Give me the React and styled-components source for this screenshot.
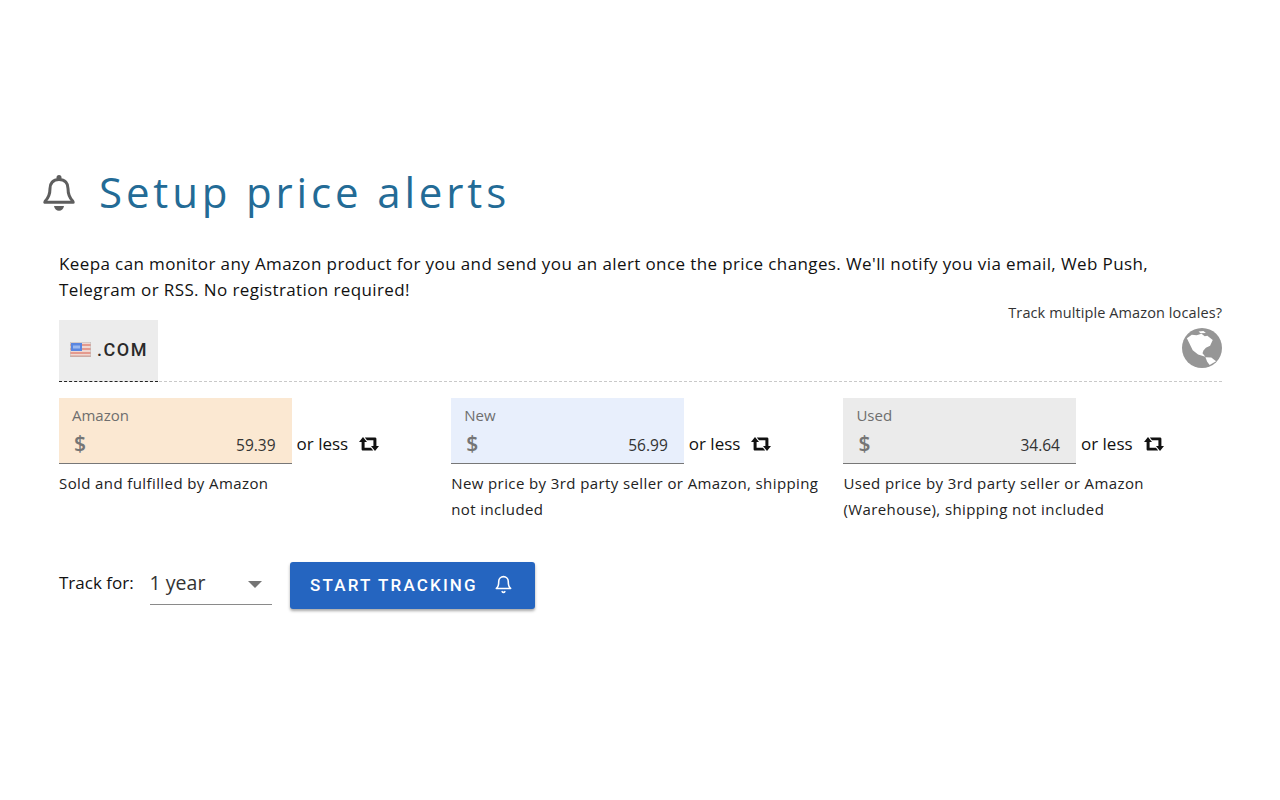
import React from "react";
import styled, { createGlobalStyle } from "styled-components";
import { FiBell } from "react-icons/fi";

const tiers = [
  { label: "Amazon", value: "59.39", tone: "#fbe8d2", text: "Sold and fulfilled by Amazon" },
  { label: "New", value: "56.99", tone: "#e8effc", text: "New price by 3rd party seller or Amazon, shipping not included" },
  { label: "Used", value: "34.64", tone: "#ebebeb", text: "Used price by 3rd party seller or Amazon (Warehouse), shipping not included" },
];

function BellIcon() {
  return (
    <svg width="34" height="38" viewBox="0 0 34 38" fill="none">
      <circle cx="17" cy="4.500" r="2.500" fill="#5e5e5e" />
      <path
        d="M17 6.500C10.800 6.500 8 10.500 8 15.500C8 21 6.300 25 3.300 28L2.800 29.300H31.200L30.700 28C27.700 25 26 21 26 15.500C26 10.500 23.200 6.500 17 6.500Z"
        stroke="#5e5e5e"
        strokeWidth="3"
        strokeLinejoin="round"
      />
      <path d="M12 33H22C21.500 36 19.500 37.800 17 37.800C14.500 37.800 12.500 36 12 33Z" fill="#5e5e5e" />
    </svg>
  );
}

function Flag() {
  return (
    <svg width="21" height="15" viewBox="0 0 21 15">
      <rect width="21" height="15" fill="#efd8d2" />
      <rect y="2" width="21" height="2" fill="#e59a8e" />
      <rect y="6" width="21" height="2" fill="#e59a8e" />
      <rect y="10" width="21" height="2" fill="#e59a8e" />
      <rect y="13.500" width="21" height="1.500" fill="#d99a8e" />
      <rect x="1" y="1" width="11" height="8" fill="#5a86e0" />
      <rect x="3" y="3.500" width="7" height="3" fill="#9db9ee" />
      <rect x="0.250" y="0.250" width="20.500" height="14.500" fill="none" stroke="#bdbdbd" strokeWidth="0.500" />
    </svg>
  );
}

function RepeatIcon() {
  return (
    <svg width="20" height="14" viewBox="0 0 20 14" fill="#111">
      <path d="M4 0L8 5H5.600V10.800H12L14.200 13.600H4C3.200 13.600 2.600 13 2.600 12.200V5H0Z" />
      <path d="M16 14L12 9H14.400V3.200H8L5.800 0.400H16C16.800 0.400 17.400 1 17.400 1.800V9H20Z" />
    </svg>
  );
}

function GlobeIcon() {
  return (
    <svg width="40" height="40" viewBox="0 0 41 41">
      <circle cx="20.500" cy="20.500" r="20.500" fill="#969696" />
      <path
        fill="#fff"
        d="M5 10.500L10 6.800L15 7.500L20 5.800L23.300 8.500L26 8L31.500 12.300L28.800 18.300L24.500 20.300L22 23L21 26L24 29.500L16.500 27.200L11 22.800L7.500 15.700Z"
      />
      <path fill="#fff" d="M24 30L30 30.300L35 34L28.300 38L25.800 34.700Z" />
      <path fill="#fff" d="M17 3.500L22 3L24.500 5L19 5.500Z" />
    </svg>
  );
}

export default function App() {
  return (
    <Page>
      <GlobalStyle />
      <Heading>
        <BellIcon />
        <Title>Setup price alerts</Title>
      </Heading>
      <Content>
        <Intro>
          Keepa can monitor any Amazon product for you and send you an alert once the price changes. We'll notify you
          via email, Web Push, Telegram or RSS. No registration required!
        </Intro>
        <TabBar>
          <Tab>
            <Flag />
            <TabLabel>.COM</TabLabel>
          </Tab>
          <Locales>
            <LocalesText>Track multiple Amazon locales?</LocalesText>
            <GlobeIcon />
          </Locales>
        </TabBar>
        <Columns>
          {tiers.map((t) => (
            <Column key={t.label}>
              <FieldRow>
                <Field $tone={t.tone}>
                  <FieldLabel>{t.label}</FieldLabel>
                  <FieldValue>
                    <Dollar>$</Dollar>
                    <Amount>{t.value}</Amount>
                  </FieldValue>
                </Field>
                <Suffix>
                  <OrLess>or less</OrLess>
                  <RepeatIcon />
                </Suffix>
              </FieldRow>
              <Hint>{t.text}</Hint>
            </Column>
          ))}
        </Columns>
        <Footer>
          <TrackLabel>Track for:</TrackLabel>
          <Select>
            <span>1 year</span>
            <Caret />
          </Select>
          <Button>
            START TRACKING
            <FiBell size={19} />
          </Button>
        </Footer>
      </Content>
    </Page>
  );
}

const GlobalStyle = createGlobalStyle`
  body {
    margin: 0;
    background: #fff;
    font-family: "Open Sans", "Noto Sans", sans-serif;
    color: #111;
  }
`;
const Page = styled.div`
  height: 800px;
  padding: 166px 58px 0 42px;
  box-sizing: border-box;
  overflow: hidden;
`;
const Heading = styled.div`
  display: flex;
  align-items: center;
  gap: 23px;
  height: 52px;
`;
const Title = styled.h1`
  margin: 0;
  font-size: 42px;
  font-weight: 400;
  letter-spacing: 3.850px;
  color: #236b96;
  line-height: 52px;
`;
const Content = styled.div`
  margin: 33px 0 0 17px;
`;
const Intro = styled.p`
  margin: 0;
  font-size: 17px;
  line-height: 26px;
  letter-spacing: 0.390px;
  color: #111;
`;
const TabBar = styled.div`
  display: flex;
  justify-content: space-between;
  align-items: flex-end;
  border-bottom: 1px dashed #c9c9c9;
`;
const Tab = styled.div`
  display: flex;
  align-items: center;
  gap: 6px;
  width: 99px;
  height: 62px;
  margin-bottom: -1px;
  padding: 0 0 2px 11px;
  box-sizing: border-box;
  background: #ececec;
  border-bottom: 1px dashed #222;
`;
const TabLabel = styled.span`
  font-family: Roboto, sans-serif;
  font-size: 18px;
  font-weight: 500;
  letter-spacing: 1.500px;
  color: #2a2a2a;
`;
const Locales = styled.div`
  display: flex;
  flex-direction: column;
  align-items: flex-end;
  gap: 5px;
  padding-bottom: 13px;
`;
const LocalesText = styled.span`
  font-size: 14.500px;
  line-height: 20px;
  letter-spacing: 0.100px;
  color: #333;
`;
const Columns = styled.div`
  display: grid;
  grid-template-columns: repeat(3, 392.200px);
  margin-top: 16px;
`;
const Column = styled.div`
  padding-right: 20px;
`;
const FieldRow = styled.div`
  display: flex;
  align-items: flex-end;
`;
const Field = styled.div`
  width: 232.600px;
  height: 66px;
  padding: 7px 16px 0 13px;
  box-sizing: border-box;
  background: ${(p) => p.$tone};
  border-bottom: 1px solid #777;
`;
const FieldLabel = styled.div`
  font-size: 15px;
  line-height: 20px;
  color: #6e6e6e;
`;
const FieldValue = styled.div`
  display: flex;
  justify-content: space-between;
  align-items: center;
  height: 38px;
`;
const Dollar = styled.span`
  padding: 0 0 0 2px;
  margin-top: -2px;
  font-size: 21px;
  font-weight: 600;
  color: #757575;
`;
const Amount = styled.span`
  margin-top: 2px;
  font-size: 15.500px;
  color: #333;
`;
const Suffix = styled.div`
  display: flex;
  align-items: center;
  gap: 11px;
  height: 40px;
  margin-left: 5px;
`;
const OrLess = styled.span`
  margin-top: -2px;
  font-size: 17px;
  color: #111;
`;
const Hint = styled.p`
  margin: 6px 0 0;
  font-size: 15px;
  line-height: 26px;
  letter-spacing: 0.400px;
  color: #222;
`;
const Footer = styled.div`
  display: flex;
  align-items: flex-start;
  margin-top: 40px;
`;
const TrackLabel = styled.span`
  font-size: 17px;
  line-height: 42px;
  color: #111;
  margin-right: 16px;
`;
const Select = styled.div`
  display: flex;
  justify-content: space-between;
  align-items: center;
  width: 122px;
  height: 43px;
  margin-right: 18px;
  padding: 0 10px 2px 0;
  box-sizing: border-box;
  border-bottom: 1px solid #8a8a8a;
  font-size: 19.500px;
  color: #333;
`;
const Caret = styled.i`
  width: 0;
  height: 0;
  margin-top: 4px;
  border-left: 7px solid transparent;
  border-right: 7px solid transparent;
  border-top: 7px solid #757575;
`;
const Button = styled.button`
  display: flex;
  align-items: center;
  justify-content: space-between;
  width: 245.500px;
  height: 46.500px;
  padding: 0 22px 1px 20.500px;
  border: 0;
  border-radius: 3px;
  background: #2565c0;
  color: #fff;
  font-family: Roboto, sans-serif;
  font-size: 17px;
  font-weight: 500;
  letter-spacing: 2.150px;
  box-shadow: 0 2px 3px rgba(0, 0, 0, 0.35);
`;
